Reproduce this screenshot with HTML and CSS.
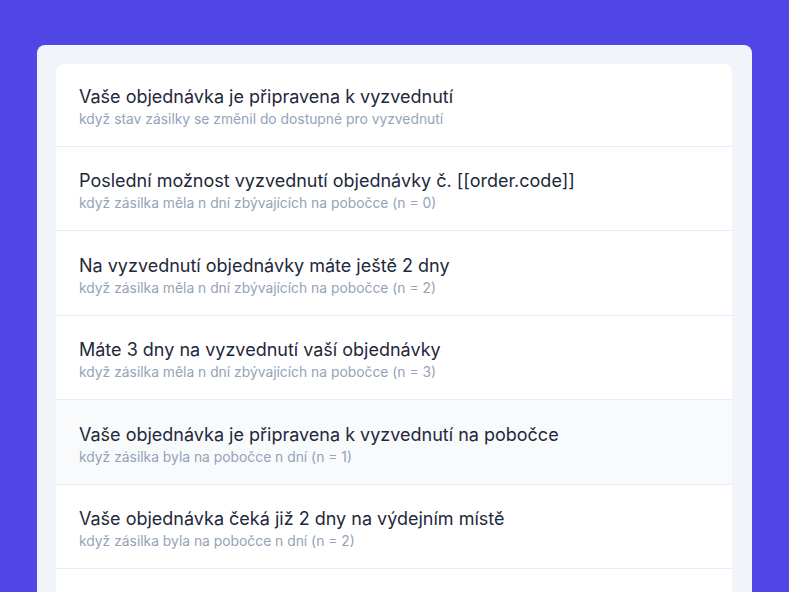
FILE: index.html
```html
<!DOCTYPE html>
<html lang="cs">
<head>
<meta charset="utf-8">
<title>Notifikace</title>
<link rel="stylesheet" href="styles.css">
</head>
<body>
<div class="stage">
  <div class="panel">
    <ul class="list">
      <li class="row">
        <div class="title">Vaše objednávka je připravena k vyzvednutí</div>
        <div class="sub">když stav zásilky se změnil do dostupné pro vyzvednutí</div>
      </li>
      <li class="row">
        <div class="title">Poslední možnost vyzvednutí objednávky č. [[order.code]]</div>
        <div class="sub">když zásilka měla n dní zbývajících na pobočce (n = 0)</div>
      </li>
      <li class="row">
        <div class="title">Na vyzvednutí objednávky máte ještě 2 dny</div>
        <div class="sub">když zásilka měla n dní zbývajících na pobočce (n = 2)</div>
      </li>
      <li class="row">
        <div class="title">Máte 3 dny na vyzvednutí vaší objednávky</div>
        <div class="sub">když zásilka měla n dní zbývajících na pobočce (n = 3)</div>
      </li>
      <li class="row row-hover">
        <div class="title">Vaše objednávka je připravena k vyzvednutí na pobočce</div>
        <div class="sub">když zásilka byla na pobočce n dní (n = 1)</div>
      </li>
      <li class="row">
        <div class="title">Vaše objednávka čeká již 2 dny na výdejním místě</div>
        <div class="sub">když zásilka byla na pobočce n dní (n = 2)</div>
      </li>
      <li class="row">
        <div class="title">Vaše objednávka čeká již 3 dny na výdejním místě</div>
        <div class="sub">když zásilka byla na pobočce n dní (n = 3)</div>
      </li>
    </ul>
  </div>
</div>
</body>
</html>
```
FILE: styles.css
```css
html, body {
  margin: 0;
  padding: 0;
  background: #ffffff;
}
body {
  font-family: Inter, "Noto Sans", sans-serif;
}
.stage {
  background: #4f46e5;
  height: 592px;
  overflow: hidden;
  padding: 45px 37px 0 37px;
  box-sizing: border-box;
}
.panel {
  background: #f1f5f9;
  border-radius: 8px 8px 0 0;
  padding: 19px 20px 19px 19px;
  min-height: 600px;
}
.list {
  list-style: none;
  margin: 0;
  padding: 0;
  background: #ffffff;
  border-radius: 8px;
  overflow: hidden;
}
.row {
  padding: 21.5px 23px 17px 23px;
  border-bottom: 1px solid #e8edf3;
}
.row:first-child {
  padding-top: 19.5px;
}
.row-hover {
  background: #f8fafc;
}
.title {
  font-size: 18px;
  line-height: 25px;
  color: #1e293b;
}
.sub {
  font-size: 13.85px;
  line-height: 20px;
  color: #94a3b8;
}
```
